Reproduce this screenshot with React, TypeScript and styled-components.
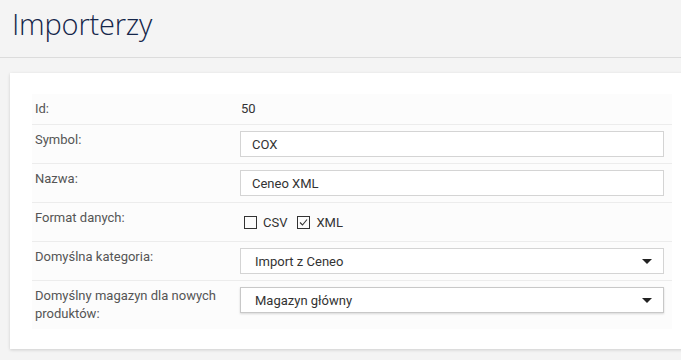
import styled, {createGlobalStyle} from "styled-components";

const GlobalStyle = createGlobalStyle`
  html, body {
    margin: 0;
    padding: 0;
    background: #f4f4f4;
    font-family: Roboto, "Liberation Sans", sans-serif;
    overflow: hidden;
  }
`;

const Page = styled.div`
  width: 681px;
  height: 360px;
  overflow: hidden;
`;

const Header = styled.header`
  height: 58px;
  border-bottom: 1px solid #dcdcdc;
  padding: 4px 12px 0 12px;
  box-sizing: border-box;
`;

const Title = styled.h1`
  margin: 0;
  font-family: "Open Sans", sans-serif;
  font-weight: 300;
  font-size: 29px;
  line-height: 40px;
  color: #14264a;
  letter-spacing: -0.2px;
`;

const Card = styled.section`
  margin: 15px -14px 0 10px;
  background: #fff;
  padding: 21px 22px 20px 22px;
  box-shadow: 0 1px 3px rgba(0, 0, 0, 0.16);
`;

const Table = styled.div`
  background: #fcfcfc;
  width: 640px;
`;

const Row = styled.div<{ $first?: boolean }>`
  display: grid;
  grid-template-columns: 205px 1fr;
  padding: 6px 8px 6px 3px;
  border-top: ${p => (p.$first ? "none" : "1px solid #ececec")};
`;

const Label = styled.div`
  font-size: 13px;
  line-height: 18px;
  color: #555;
  padding-right: 20px;
`;

const Value = styled.div`
  font-size: 13px;
  line-height: 18px;
  color: #333;
  padding-left: 1px;
`;

const Input = styled.div`
  height: 26px;
  box-sizing: border-box;
  border: 1px solid #d4d4d4;
  background: #fff;
  padding: 0 11px;
  display: flex;
  align-items: center;
  font-size: 13px;
  color: #333;
`;

const Select = styled(Input)<{ $focused?: boolean }>`
  justify-content: space-between;
  padding: 0 11px 0 14px;
  border-color: ${p => (p.$focused ? "#c8c8c8" : "#d4d4d4")};
  box-shadow: ${p => (p.$focused ? "0 1px 2px rgba(0,0,0,0.15)" : "none")};
`;

const Arrow = styled.span`
  width: 0;
  height: 0;
  border-left: 5px solid transparent;
  border-right: 5px solid transparent;
  border-top: 5px solid #222;
`;

const Checks = styled.div`
  display: flex;
  align-items: center;
  height: 26px;
  padding-left: 4px;
  gap: 10px;
`;

const Check = styled.label`
  display: flex;
  align-items: center;
  gap: 6px;
  font-size: 13px;
  color: #333;
`;

const Box = styled.span`
  width: 13px;
  height: 13px;
  box-sizing: border-box;
  border: 1px solid #333;
  display: inline-flex;
  align-items: center;
  justify-content: center;
`;

const CheckBox = ({checked}: { checked?: boolean }) => (
    <Box>
        {checked && (
            <svg width="9" height="9" viewBox="0 0 9 9">
                <path d="M1 4.5 L3.5 7 L8 1.5" fill="none" stroke="#333" strokeWidth="1.1"/>
            </svg>
        )}
    </Box>
);

export default function App() {
    return (
        <Page>
            <GlobalStyle/>
            <Header>
                <Title>Importerzy</Title>
            </Header>
            <Card>
                <Table>
                    <Row $first>
                        <Label>Id:</Label>
                        <Value>50</Value>
                    </Row>
                    <Row>
                        <Label>Symbol:</Label>
                        <Input>COX</Input>
                    </Row>
                    <Row>
                        <Label>Nazwa:</Label>
                        <Input>Ceneo XML</Input>
                    </Row>
                    <Row>
                        <Label>Format danych:</Label>
                        <Checks>
                            <Check><CheckBox/>CSV</Check>
                            <Check><CheckBox checked/>XML</Check>
                        </Checks>
                    </Row>
                    <Row>
                        <Label>Domyślna kategoria:</Label>
                        <Select>Import z Ceneo<Arrow/></Select>
                    </Row>
                    <Row>
                        <Label>Domyślny magazyn dla nowych produktów:</Label>
                        <Select $focused>Magazyn główny<Arrow/></Select>
                    </Row>
                </Table>
            </Card>
        </Page>
    );
}
